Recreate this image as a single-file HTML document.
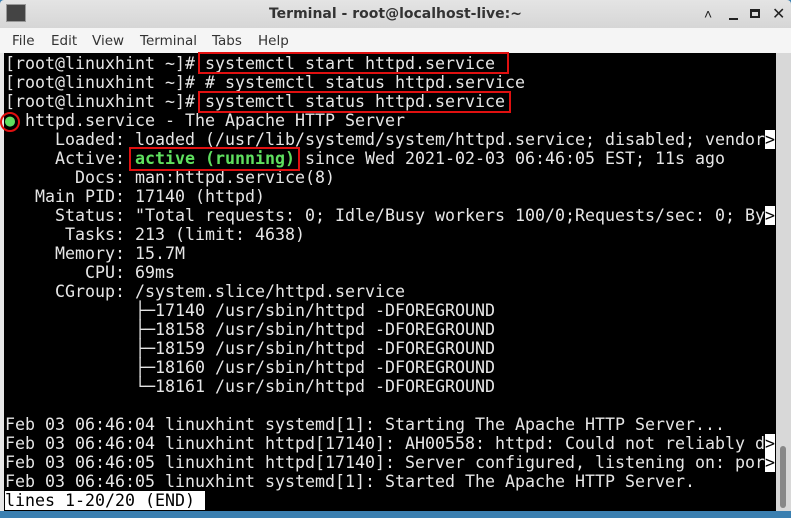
<!DOCTYPE html>
<html><head><meta charset="utf-8"><style>
body{margin:0;width:791px;height:518px;overflow:hidden;background:#3a7fb0;position:relative;font-family:"Liberation Sans","DejaVu Sans",sans-serif}
#title{position:absolute;left:0;top:0;width:791px;height:28px;background:linear-gradient(#e4e4e4,#d6d6d6);border-radius:4px 4px 0 0}
#title .t{position:absolute;left:0;width:791px;text-align:center;top:6px;font-size:14px;font-weight:bold;color:#333;font-family:"DejaVu Sans",sans-serif}
#menu{position:absolute;left:0;top:28px;width:791px;height:25px;background:#f5f5f5;font-size:13.5px;color:#333;font-family:"DejaVu Sans",sans-serif}
#menu span{position:absolute;top:5px}
#term{position:absolute;left:0;top:53px;width:776px;height:458px;background:#000;border-left:4px solid #e8e8e8;box-sizing:border-box}
#sb{position:absolute;left:776px;top:53px;width:15px;height:458px;background:#d8d8d8}
#sb div{position:absolute;left:4px;top:393px;width:6px;height:62px;background:#888;border-radius:3px}
pre{position:absolute;left:5px;top:54px;margin:0;font-family:"DejaVu Sans Mono",monospace;font-size:16.62px;line-height:19px;color:#e6e6e6}
.g{color:#5fe05f;font-weight:bold}
.i{background:#fff;color:#000}
.box{position:absolute;border:2px solid #e01010;box-sizing:border-box}
</style></head><body>
<div id="title"><div style="position:absolute;left:6px;top:4px;width:18px;height:16px;background:#444;border:1px solid #999"></div><div class="t">Terminal - root@localhost-live:~</div>
<div style="position:absolute;left:704px;top:6px;font-size:14px;color:#222">&#x2c4;</div>
<div style="position:absolute;left:729px;top:18px;width:9px;height:2px;background:#222"></div>
<div style="position:absolute;left:750px;top:9px;width:10px;height:9px;border:2px solid #222;box-sizing:border-box;border-top-width:3px"></div>
<div style="position:absolute;left:772px;top:4px;font-size:16px;font-weight:bold;color:#222">✕</div></div>
<div id="menu"><span style="left:12px">File</span><span style="left:51px">Edit</span><span style="left:92px">View</span><span style="left:140px">Terminal</span><span style="left:212px">Tabs</span><span style="left:258px">Help</span></div>
<div id="term"></div><div id="sb"><div></div></div>
<pre>[root@linuxhint ~]# systemctl start httpd.service
[root@linuxhint ~]# # systemctl status httpd.service
[root@linuxhint ~]# systemctl status httpd.service
<span class="g">●</span> httpd.service - The Apache HTTP Server
     Loaded: loaded (/usr/lib/systemd/system/httpd.service; disabled; vendor<span class="i">&gt;</span>
     Active: <span class="g">active (running)</span> since Wed 2021-02-03 06:46:05 EST; 11s ago
       Docs: man:httpd.service(8)
   Main PID: 17140 (httpd)
     Status: "Total requests: 0; Idle/Busy workers 100/0;Requests/sec: 0; By<span class="i">&gt;</span>
      Tasks: 213 (limit: 4638)
     Memory: 15.7M
        CPU: 69ms
     CGroup: /system.slice/httpd.service
             ├─17140 /usr/sbin/httpd -DFOREGROUND
             ├─18158 /usr/sbin/httpd -DFOREGROUND
             ├─18159 /usr/sbin/httpd -DFOREGROUND
             ├─18160 /usr/sbin/httpd -DFOREGROUND
             └─18161 /usr/sbin/httpd -DFOREGROUND

Feb 03 06:46:04 linuxhint systemd[1]: Starting The Apache HTTP Server...
Feb 03 06:46:04 linuxhint httpd[17140]: AH00558: httpd: Could not reliably d<span class="i">&gt;</span>
Feb 03 06:46:05 linuxhint httpd[17140]: Server configured, listening on: por<span class="i">&gt;</span>
Feb 03 06:46:05 linuxhint systemd[1]: Started The Apache HTTP Server.
<span class="i">lines 1-20/20 (END) </span></pre>
<div class="box" style="left:198px;top:52px;width:311px;height:22px"></div>
<div class="box" style="left:198px;top:91px;width:313px;height:22px"></div>
<div class="box" style="left:129px;top:147px;width:171px;height:24px"></div>
<div class="box" style="left:0px;top:112px;width:20px;height:20px;border-radius:50%"></div>
</body></html>
